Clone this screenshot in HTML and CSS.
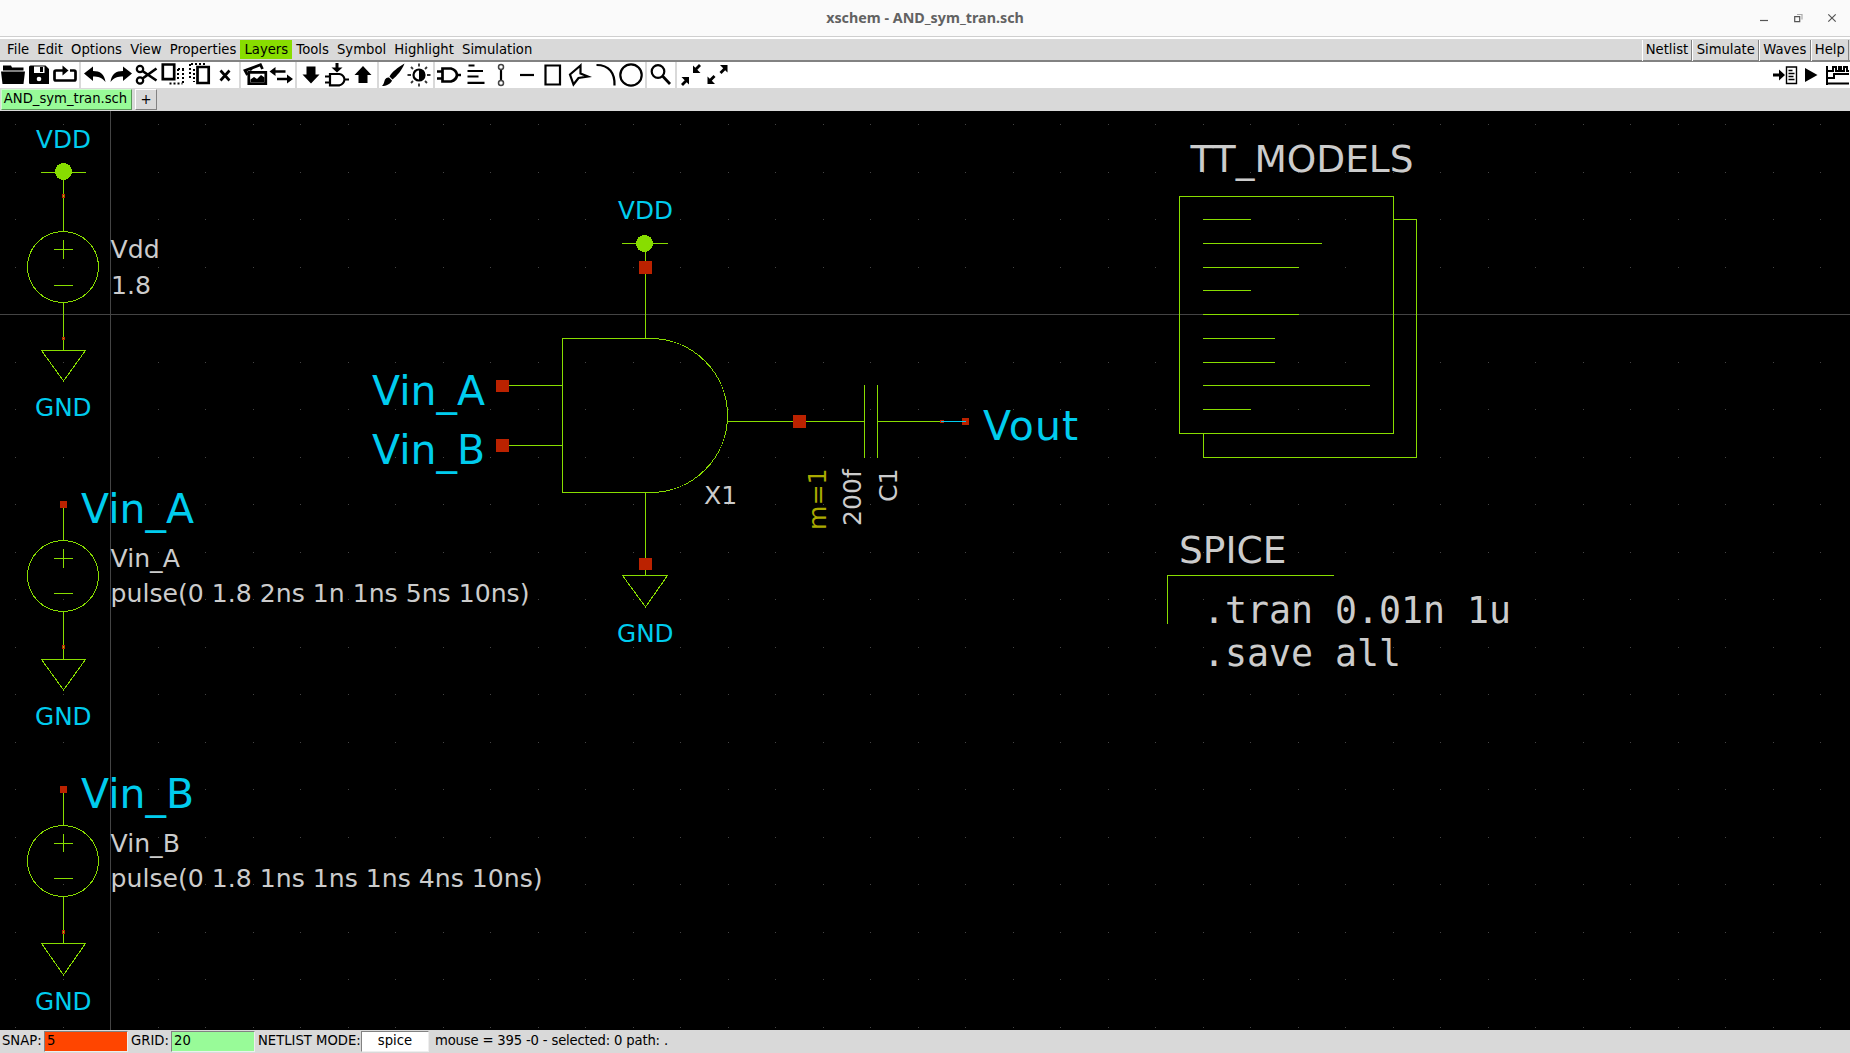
FILE: index.html
```html
<!DOCTYPE html>
<html lang="en">
<head>
<meta charset="utf-8">
<title>xschem - AND_sym_tran.sch</title>
<link rel="stylesheet" href="styles.css">
</head>
<body>
<header class="titlebar">
  <h1 class="title">xschem - AND_sym_tran.sch</h1>
  <div class="window-controls">
    <svg viewBox="0 0 12 12"><path d="M2 8.500h8"/></svg>
    <svg viewBox="0 0 12 12"><path d="M2.700 4.700h5v5h-5z"/><path class="faint" d="M5 2.500h5v5"/></svg>
    <svg viewBox="0 0 12 12"><path d="M2.300 2.300l7.400 7.400M9.700 2.300l-7.400 7.400"/></svg>
  </div>
</header>
<nav class="menubar">
  <div class="menus">
    <span>File</span><span>Edit</span><span>Options</span><span>View</span><span>Properties</span><span class="active">Layers</span><span>Tools</span><span>Symbol</span><span>Highlight</span><span>Simulation</span>
  </div>
  <div class="actions">
    <span>Netlist</span><span>Simulate</span><span>Waves</span><span>Help</span>
  </div>
</nav>
<div class="toolbar">
  <div class="group">
    <svg viewBox="0 0 26 26"><path class="f" d="M3 3.500h8l1 2h11.500v3H3zM1 9.500h24L23.500 22H2.500z"/></svg>
    <svg viewBox="0 0 26 26"><path class="f" d="M4.500 3.500H19.500L23 7V22H4Q3 22 3 20.500V5Q3 3.500 4.500 3.500z"/><path class="w" d="M8 4.500H18.500V11H8z"/><path class="f" d="M14 5h3v5h-3z"/><circle class="w" cx="13" cy="17" r="2.300"/></svg>
    <svg viewBox="0 0 26 26"><path class="s3" d="M12 8.500H4Q2.500 8.500 2.500 10V17Q2.500 18.500 4 18.500H22Q23.500 18.500 23.500 17V10Q23.500 8.500 22 8.500H18"/><path class="f" d="M10.500 3.500L16.500 8.500L10.500 13.500z"/></svg>
  </div>
  <div class="group">
    <svg viewBox="0 0 26 26"><path class="f" d="M2 11.500L11 4.500V9C18 9 22.500 12 23.500 20C20 15.500 16 14.500 11 14.500V19z"/></svg>
    <svg viewBox="0 0 26 26"><path class="f" d="M24 11.500L15 4.500V9C8 9 3.500 12 2.500 20C6 15.500 10 14.500 15 14.500V19z"/></svg>
    <svg viewBox="0 0 26 26"><circle class="s2" cx="6" cy="7" r="3.200"/><circle class="s2" cx="6" cy="18.500" r="3.200"/><path class="s3" d="M8.500 9L22.500 18.500M8.500 16.500L22.500 6.500"/></svg>
    <svg viewBox="0 0 26 26"><path class="s3" d="M2.800 2.500h11.400v14.700H2.800z"/><path class="dots" d="M18 7h6M9.500 21.500h13M23 7v14M18 7v12"/></svg>
    <svg viewBox="0 0 26 26"><path class="s3" d="M11.500 5h11.200V21H11.500z"/><path class="dots" d="M5 2h14M4 2v15M8 7v13"/></svg>
    <svg viewBox="0 0 26 26"><path class="s3" d="M8.500 8.500l9 10M17.500 8.500l-9 10"/></svg>
  </div>
  <div class="group">
    <svg viewBox="0 0 26 26"><path class="s3" d="M6.800 10.300h17v11.400H6.800z"/><path class="s3" d="M5.500 13L3 8.500L18.500 2.800L20.500 7"/><path class="f" d="M6 7.500L12 5.500L9 9zM8.500 20v-2.500l3.500-2.500 3 2 4-4 3.500 2.500v4.500z"/></svg>
    <svg viewBox="0 0 26 26"><path class="f" d="M1.500 9.500L7.500 5V8.200H17.500V10.800H7.500V14zM25 17L19 12.500V15.700H9V18.300H19V21.500z"/></svg>
  </div>
  <div class="group">
    <svg viewBox="0 0 26 26"><path class="f" d="M8.500 4.500h9v8h4L13 21.500 4.500 12.500h4z"/></svg>
    <svg viewBox="0 0 26 26"><path class="f" d="M11.500 1h3v4.500h4L13 10.500 7.500 5.500h4z"/><path class="s2" d="M6 12h9.500Q20 13 20.500 17.500Q20 22 15.500 23.300H6zM1 14.500h5M1 20.500h5M20 17.500h5"/></svg>
    <svg viewBox="0 0 26 26"><path class="f" d="M8.500 21h9v-8h4L13 4 4.500 13h4z"/></svg>
  </div>
  <div class="group">
    <svg viewBox="0 0 26 26"><path class="f" d="M24.500 1.500C18 5 12 10 9.500 14.500L12.500 17.500C17 14 22 8 24.500 1.500zM9 15.500l3 3C11 22 6 24 2 24c2-2 2-4 3-6.500Q6.500 15 9 15.500z"/></svg>
    <svg viewBox="0 0 26 26"><circle class="s2" cx="13" cy="13" r="5.500"/><path class="f" d="M13 7.500a5.500 5.500 0 0 1 0 11z"/><path class="ray" d="M13 1.500v3M13 21.500v3M1.500 13h3.500M21 13h3.500M5 5l2 2M19 19l2 2M5 21l2-2M19 7l2-2"/></svg>
  </div>
  <div class="group">
    <svg viewBox="0 0 26 26"><path class="s3" d="M6.500 6.500H15Q20.500 8 21 13Q20.500 18 15 19.500H6.500zM1 9.500h5M1 16.500h5M21 13h4"/></svg>
    <svg viewBox="0 0 26 26"><path class="s2" d="M6.500 3.500h6M5.500 9h15.500M5.500 14.500h11M5.500 20.800h17"/></svg>
    <svg viewBox="0 0 26 26"><path class="s2" d="M13 7v12"/><circle class="ring" cx="13" cy="5" r="2.500"/><circle class="ring" cx="13" cy="21" r="2.500"/></svg>
    <svg viewBox="0 0 26 26"><path class="s2" d="M6 13h14"/></svg>
    <svg viewBox="0 0 26 26"><path class="s2" d="M5.500 3.500h14.500v19H5.500z"/></svg>
    <svg viewBox="0 0 26 26"><path class="s2" d="M14.500 3.500L4 12.500L7.500 22.500L12.500 16L22 14.500L14.500 11.500z"/></svg>
    <svg viewBox="0 0 26 26"><path class="s2" d="M4.500 3C17 3 23 11 22.500 23.500"/></svg>
    <svg viewBox="0 0 26 26"><circle class="s2" cx="13" cy="13" r="10.700"/></svg>
  </div>
  <div class="group">
    <svg viewBox="0 0 26 26"><circle class="s2" cx="10" cy="9.500" r="6.300"/><path class="s3" d="M14.500 14L22 22"/></svg>
  </div>
  <div class="group last">
    <svg viewBox="0 0 26 26"><path class="f" d="M15 11V3.500l2.300 2.300L21 2l2 2-3.700 3.700L22.500 11zM11 15v7.500L8.700 20.200 5 24l-2-2 3.700-3.700L3.500 15z"/></svg>
    <svg viewBox="0 0 26 26"><path class="f" d="M23.500 3v7.500L21.200 8.200 17.500 12l-2-2L19.200 6.300 16 3zM3.500 22v-7.500L5.800 16.800 9.500 13l2 2L7.800 18.700 11 22z"/></svg>
  </div>
  <div class="group right">
    <svg viewBox="0 0 26 26"><path class="f" d="M1 11.500h6V7.500l6 5.500-6 5.500v-4H1z"/><path class="thin" d="M14.500 5h10v16.500h-10zM16.500 8.500h4M16.500 11.500h6M16.500 14.500h5M16.500 17.500h6"/></svg>
    <svg viewBox="0 0 26 26"><path class="f" d="M7 6L19.500 13 7 20z"/></svg>
    <svg viewBox="0 0 26 26"><path class="wave" d="M3 4v19M2 21.500h23M3 9h6V5h3v4h3V5h2v4h3V5h3v4h2M3 16h7v-4h15"/></svg>
  </div>
</div>
<div class="tabs">
  <span class="tab current">AND_sym_tran.sch</span><span class="tab add">+</span>
</div>
<main class="canvas">
  <svg class="schematic" viewBox="0 111 1850 919">
    <defs>
      <pattern id="grid" x="15" y="124" width="95" height="95" patternUnits="userSpaceOnUse">
        <path class="dot" d="M0 0h1v1h-1zM48 0h1v1h-1zM0 48h1v1h-1zM48 48h1v1h-1z"/>
      </pattern>
    </defs>
    <rect x="0" y="111" width="1850" height="919" fill="url(#grid)"/>
    <path class="axis" d="M110.500 111V1030M0 314.500H1850"/>

    <!-- supply source -->
    <g class="dev">
      <path d="M41 172.500H86M63.500 180V231M63.500 240V259M54 249.500H73M54 285.500H73M63.500 303V350"/>
      <circle cx="63" cy="267" r="35.500"/>
      <path d="M41.500 350.500H85.500L63.500 381z"/>
      <circle class="ball" cx="63.500" cy="171.500" r="8.500"/>
    </g>
    <path class="node" d="M62.500 194.500h2v3h-2zM62.500 337.500h2v2h-2z"/>

    <!-- input A source -->
    <g class="dev">
      <path d="M63.500 508V540M63.500 549V568M54 558.500H73M54 593.500H73M63.500 612V659"/>
      <circle cx="63" cy="576" r="35.500"/>
      <path d="M41.500 659.500H85.500L63.500 690z"/>
    </g>
    <path class="node" d="M62.500 645.500h2v3h-2z"/>
    <path class="pin" d="M60 501h7v7h-7z"/>

    <!-- input B source -->
    <g class="dev">
      <path d="M63.500 793V825M63.500 834V852M54 843.500H73M54 878.500H73M63.500 897V943"/>
      <circle cx="63" cy="861" r="35.500"/>
      <path d="M41.500 943.500H85.500L63.500 975z"/>
    </g>
    <path class="node" d="M62.500 930.500h2v3h-2z"/>
    <path class="pin" d="M60 786h7v7h-7z"/>

    <!-- AND gate -->
    <g class="dev">
      <path d="M622 243.500H668M645.500 250V338M645.500 493V575M509 385.500H562M509 445.500H562M727 421.500H864M878 421.500H942"/>
      <path d="M650.500 338.500H562.500V492.500H650.500A77 77 0 0 0 650.500 338.500"/>
      <path d="M622.500 575.500H667.500L645.500 607z"/>
      <path d="M864.500 385V458M877.500 385V458"/>
      <circle class="ball" cx="644.500" cy="243.500" r="8.500"/>
    </g>
    <path class="pin" d="M639 261h13v13h-13zM639 558h13v12h-13zM496 380h13v12h-13zM496 439h13v13h-13zM793 415h13v13h-13zM940 420h4v3h-4zM962 418h7v7h-7z"/>
    <path class="wire" d="M941 421.500H966"/>

    <!-- model library -->
    <g class="dev">
      <path d="M1179.500 196.500H1393.500V433.500H1179.500zM1393 219.500H1416.500V457.500H1203.500V434"/>
      <path d="M1203 219.500H1251M1203 243.500H1322M1203 267.500H1299M1203 290.500H1251M1203 314.500H1299M1203 338.500H1275M1203 362.500H1275M1203 385.500H1370M1203 409.500H1251"/>
      <path d="M1334 575.500H1167.500V624"/>
    </g>

    <g class="net tag">
      <text x="36" y="148">VDD</text><text x="35" y="416">GND</text>
      <text x="618" y="219">VDD</text><text x="617" y="642">GND</text>
      <text x="35" y="725">GND</text><text x="35" y="1010">GND</text>
    </g>
    <g class="net big">
      <text x="372" y="405">Vin_A</text><text x="372" y="464">Vin_B</text>
      <text x="81" y="523">Vin_A</text><text x="81" y="808">Vin_B</text>
      <text x="983" y="440" textLength="95">Vout</text>
    </g>
    <g class="label small">
      <text x="110.500" y="258">Vdd</text><text x="111" y="294">1.8</text>
      <text x="110.500" y="567">Vin_A</text><text x="110.500" y="602">pulse(0 1.8 2ns 1n 1ns 5ns 10ns)</text>
      <text x="110.500" y="852">Vin_B</text><text x="110.500" y="887">pulse(0 1.8 1ns 1ns 1ns 4ns 10ns)</text>
      <text x="704" y="504">X1</text>
      <text class="param" transform="translate(826 530) rotate(-90)">m=1</text>
      <text transform="translate(861 526) rotate(-90)">200f</text>
      <text transform="translate(897 502) rotate(-90)">C1</text>
    </g>
    <g class="label mid">
      <text x="1190.500" y="172">TT_MODELS</text><text x="1179" y="563">SPICE</text>
    </g>
    <g class="label code">
      <text x="1203" y="623" textLength="308">.tran 0.01n 1u</text><text x="1203" y="666" textLength="198">.save all</text>
    </g>
  </svg>
</main>
<footer class="status">
  <span class="caption snap">SNAP:</span><span class="entry red">5</span>
  <span class="caption grid">GRID:</span><span class="entry green">20</span>
  <span class="caption mode">NETLIST MODE:</span><span class="entry white">spice</span>
  <span class="message">mouse = 395 -0 - selected: 0 path: .</span>
</footer>
</body>
</html>
```
FILE: styles.css
```css
* { box-sizing: border-box; }

body {
  margin: 0;
  width: 1850px;
  height: 1053px;
  display: flex;
  flex-direction: column;
  overflow: hidden;
  background: #d9d9d9;
  color: #000;
  font: 13.2px/19px "DejaVu Sans", sans-serif;
  white-space: nowrap;
}

.titlebar {
  height: 37px;
  flex: none;
  display: grid;
  grid-template-columns: 1fr auto 1fr;
  align-items: center;
  background: #fafafa;
  border-bottom: 1px solid #cfcfcf;
}
.title {
  grid-column: 2;
  margin: 0;
  font: bold 14.3px/20px "Noto Sans", sans-serif;
  color: #626262;
}
.window-controls {
  justify-self: end;
  display: flex;
  gap: 22px;
  padding-right: 12px;
}
.window-controls svg { width: 12px; height: 12px; fill: none; stroke: #555; stroke-width: 1.2; }
.window-controls .faint { stroke: #aaa; }

.menubar {
  height: 25px;
  flex: none;
  display: flex;
  justify-content: space-between;
  padding: 1px 1px 0 2px;
  border-top: 2px solid #fff;
  border-bottom: 2px solid #828282;
}
.menus { display: flex; height: 19px; padding-left: 1px; }
.menus span { padding: 0 4.1px; }
.menus .active { background: #88dd00; }
.actions { display: flex; height: 21px; }
.actions span {
  padding: 0 3.2px;
  border-left: 1px solid #fff;
  border-right: 1px solid #828282;
}

.toolbar {
  height: 26px;
  flex: none;
  display: flex;
  background: #fff;
}
.group { display: flex; margin-right: 4px; }
.group::after {
  content: "";
  width: 2px;
  margin: 0 -3px 0 1px;
  background: #d9d9d9;
}
.group.last::after, .group.right::after { display: none; }
.group.right { margin: 0 0 0 auto; }
.toolbar svg { width: 26px; height: 26px; fill: none; }
.toolbar .f { fill: #000; }
.toolbar .w { fill: #fff; }
.s2 { stroke: #000; stroke-width: 2.2; }
.s3 { stroke: #000; stroke-width: 2.7; }
.thin { stroke: #000; stroke-width: 1.4; }
.wave { stroke: #000; stroke-width: 2; }
.ray { stroke: #333; stroke-width: 1.8; }
.ring { stroke: #444; stroke-width: 1.5; }
.dots { stroke: #000; stroke-width: 2; stroke-dasharray: 2 2; }

.tabs { height: 23px; flex: none; display: flex; gap: 3px; padding: 1px; }
.tab {
  height: 21px;
  border: 1px solid;
  border-color: #fff #828282 #828282 #fff;
  text-align: center;
  line-height: 18px;
}
.tab.current { width: 131px; padding-right: 2px; background: #98fb98; border-color: #c8ffc8 #5b975b #5b975b #c8ffc8; }
.tab.add { width: 22px; line-height: 19px; }

.canvas { height: 919px; flex: none; background: #000; }
.schematic { display: block; width: 1850px; height: 919px; }
.dot { fill: #444; }
.axis { stroke: #444; shape-rendering: crispEdges; }
.dev { fill: none; stroke: #88dd00; stroke-width: 1; shape-rendering: crispEdges; }
.dev .ball { fill: #88dd00; stroke: none; }
.node { fill: none; stroke: #bb2200; shape-rendering: crispEdges; }
.pin { fill: #bb2200; }
.wire { stroke: #00ccee; }
.net { fill: #00ccee; }
.label { fill: #cccccc; }
.param { fill: #aaaa00; }
.small { font-size: 25.15px; }
.tag { font-size: 24.7px; }
.mid { font-size: 37.5px; }
.big { font-size: 41px; }
.code { font-family: "DejaVu Sans Mono", monospace; font-size: 36.6px; }

.status { height: 23px; flex: none; display: flex; padding: 1px 0 1px 2px; line-height: 20px; }
.entry {
  height: 21px;
  padding-left: 2px;
  border: 1px solid;
  border-color: #828282 #eee #eee #828282;
  line-height: 18px;
}
.caption.snap { width: 42px; }
.entry.red { width: 84px; background: #ff4500; margin-right: 3px; }
.caption.grid { width: 40px; }
.entry.green { width: 84px; background: #98fb98; margin-right: 3px; }
.caption.mode { width: 103px; }
.entry.white { width: 68px; padding: 0; background: #fff; text-align: center; margin-right: 6px; }
.message { letter-spacing: -0.17px; }
```
